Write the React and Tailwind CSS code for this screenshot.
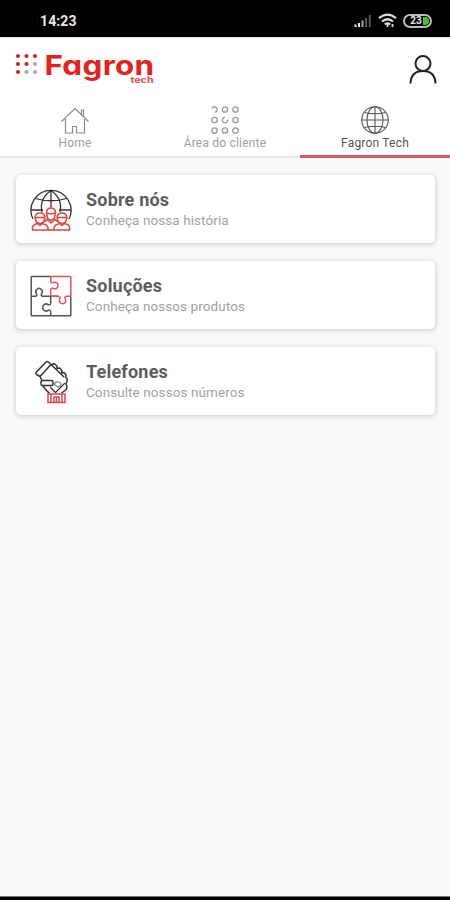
import React from "react";

function StatusBar() {
  return (
    <header className="flex h-[37px] shrink-0 items-center justify-between bg-black pt-1 pr-[18px] pl-10 text-[#e8e8e8]">
      <span className="text-[14px] leading-4 font-bold tracking-[0.1px]">14:23</span>
      <div className="flex items-center gap-[6px]">
        <svg width="18" height="14" viewBox="0 0 18 14" fill="none" strokeWidth="2">
          <path d="M1.500 13v-2.500M5 13V9" stroke="#eee" />
          <path d="M8.500 13V6.500" stroke="#aaa" />
          <path d="M12 13V4M15.800 13V1" stroke="#555" />
        </svg>
        <svg width="19" height="15" viewBox="0 0 19 15" fill="none" stroke="#ddd" strokeWidth="2.200">
          <path d="M1 5.200Q9.500-2 18 5.200M4 8.500q5.500-4.500 11 0M6.800 11.300q2.700-2 5.400 0" />
          <path d="M9.500 11v3M14.500 11v3" strokeWidth="1.800" />
        </svg>
        <div className="flex h-[14px] w-[29px] items-center justify-center rounded-full border-2 border-[#bbb] pl-1">
          <span className="text-[10px] leading-[10px] font-bold">23</span>
          <span className="ml-px h-2 w-[6px] rounded-r-full bg-[#45c431]" />
        </div>
      </div>
    </header>
  );
}

function Logo() {
  const dots = [
    [2, 2, "#d7202b"], [10.500, 2, "#d7202b"], [19, 2, "#d7202b"],
    [2, 10, "#d7202b"], [10.500, 10, "#d7202b"], [19, 10, "#aaa"],
    [2, 18, "#d7202b"], [10.500, 18, "#aaa"], [19, 18, "#aaa"],
  ];
  return (
    <svg width="142" height="40" viewBox="0 0 142 40" role="img" aria-label="Fagron tech">
      {dots.map(([x, y, c]) => (
        <circle key={x + "-" + y} cx={x + 1} cy={y + 6} r="2.100" fill={c} />
      ))}
      <text x="29.500" y="26.500" textLength="110" lengthAdjust="spacingAndGlyphs" className="fill-[#e5201d] font-['Inter',sans-serif] text-[27.500px] font-bold tracking-[0.3px] [font-feature-settings:'cv11']">
        Fagron
      </text>
      <text x="115.500" y="34.500" textLength="23" lengthAdjust="spacingAndGlyphs" className="fill-[#e0474b] font-['Inter',sans-serif] text-[8.500px] font-bold">
        tech
      </text>
    </svg>
  );
}

function HomeIcon() {
  return (
    <svg width="30" height="30" viewBox="0 0 30 30" fill="none" stroke="#8c8c8c" strokeWidth="1.200">
      <path d="M1.500 15.500 15 2.500l13.500 13M21.500 8V4h2v6M5.500 13v14h7v-6.500h4V27h8V13" />
    </svg>
  );
}

function GridIcon() {
  const full = [[15, 3.500], [25.500, 3.500], [4.500, 14], [25.500, 14], [4.500, 24.500], [15, 24.500], [25.500, 24.500]];
  return (
    <svg width="30" height="30" viewBox="0 0 30 30" fill="none" stroke="#9b9b9b" strokeWidth="1.300">
      {full.map(([x, y]) => (
        <circle key={x + "-" + y} cx={x} cy={y} r="2.700" />
      ))}
      <path d="M2 2.500a2.700 2.700 0 1 1 2.700 3.700M15 11.400a2.700 2.700 0 1 0 2.700 2.200" />
    </svg>
  );
}

function Globe() {
  return (
    <svg width="30" height="30" viewBox="0 0 30 30" fill="none" stroke="#555" strokeWidth="1.100">
      <circle cx="15" cy="14" r="13.300" />
      <ellipse cx="15" cy="14" rx="8" ry="13.300" />
      <path d="M15 .700v26.600M4.500 6.500Q15 9 25.500 6.500M1.700 14h26.600M4.500 21.500Q15 19 25.500 21.500" />
    </svg>
  );
}

function Tab({ icon, label, active }) {
  return (
    <button className={"flex h-[55px] flex-1 flex-col items-center pt-[3px] " + (active ? "border-b-[3px] border-[#d85c5a] text-[#555]" : "border-b-2 border-[#e8e8e8] text-[#a0a0a0]")}>
      {icon}
      <span className="text-[12px] leading-[14px] tracking-[0.2px] whitespace-nowrap">{label}</span>
    </button>
  );
}

function TeamIcon() {
  return (
    <svg className="mt-0.5" width="42" height="44" viewBox="0 0 42 44" fill="none" strokeWidth="1.300">
      <g stroke="#333">
        <path d="M3 31A20 20 0 1 1 39 31" />
        <path d="M21 2.500v17M12 24Q9 11 21 2.500 33 11 30 24M5.500 10.500Q21 15 36.500 10.500M1 22h12M29 22h12" />
      </g>
      <g stroke="#dc4540" strokeWidth="1.500">
        <path d="M16.500 25q0-5 4.500-5t4.500 5l-1 5-3.500 2.500-3.500-2.500zM16.500 25q4 1.500 9 0" />
        <path d="M5 30q0-5 5-5t5 5l-1.500 4-3.500 2-3.500-2zM27 30q0-5 5-5t5 5l-1.500 4-3.500 2-3.500-2zM5 29.500h10M27 29.500h10" />
        <path d="M2.500 42v-3.500l2-2 3-1 2.500 2 2.500-2 4 1.500 1.500 2.500V42zM24 42v-2.500l1.500-2.500 4-1.500 2.500 2 2.500-2 3 1 2 2V42zM14 34l3-2.500 4 3.500 4-3.500 3 2.500M18 42h6" />
      </g>
    </svg>
  );
}

function PuzzleIcon() {
  return (
    <svg className="mt-0.5" width="42" height="44" viewBox="0 0 42 44" fill="none" strokeWidth="1.500">
      <g stroke="#555">
        <path d="M20 2.500H2q-.800 0-.800.800V41q0 .800.800.800H40q.800 0 .800-.800V23M1.200 22.300H6M12 22.300h16M20.700 22v8M20.700 37v5" />
        <path d="M6 22.300q1.500-1 .300-3a3.200 3.200 0 1 1 5.500 0q-1.200 2 .200 3M20.700 30q-.700 1.500-2.700.500a3.500 3.500 0 1 0 0 6q2-1 2.700.500" />
      </g>
      <g stroke="#df555a">
        <path d="M20.700 21.500V15M20.700 8V2.500H40q.800 0 .800.800v19h-5M29 22.300h-8" />
        <path d="M20.700 8q.700 1.500 2.700.500a3.300 3.300 0 1 1 0 6q-2-1-2.700.500M29 22.300q2 1 .700 3a3.200 3.200 0 1 0 5.800 0q-1.200-2 .300-3" />
      </g>
    </svg>
  );
}

function PhoneIcon() {
  return (
    <svg className="mt-0.5" width="42" height="44" viewBox="0 0 42 44" fill="none" strokeWidth="1.500">
      <g stroke="#333" strokeLinejoin="round">
        <path d="M6 12.500 16 2q1-.800 2.300 0L21 4.500 10 16.500l-3.500-2q-1-1-.500-2ZM21 4.500 34 17M10 16.500l2 4" />
        <rect x="11" y="20.500" width="12" height="5" rx="1.500" />
        <path d="m21.500 5 2.500-1.500 3 2.500v2.500l2.500-.500 2.500 2.500-.500 2.500 2.500-.500 2 2.500-.500 2.500 1.500 1v3l-1 2.500 1 2.500-.500 3L31.500 33M12.500 25.500l4 5 3 3" />
        <path d="m20 27 5.500 5.500L35 23" strokeWidth="1.200" />
        <path d="M24.500 25q.500-4 4-3t2 4l-2.500 1z" stroke="#777" strokeWidth="1.200" />
      </g>
      <g stroke="#d94b45">
        <path d="M18 34h17v8.500H18zM21 34v8.500M32 34v8.500M24 42v-5h5v5M26.500 37v5" />
      </g>
    </svg>
  );
}

function Card({ icon, title, text }) {
  return (
    <article className="flex h-[68px] items-center rounded-[5px] bg-white pl-[14px] shadow-[0_1px_4px_1px_rgba(0,0,0,0.14)]">
      {icon}
      <div className="ml-[14px] flex flex-col pt-px">
        <h2 className="text-[18px] leading-[21px] font-bold tracking-[0.2px] text-[#5c5c5c]">{title}</h2>
        <p className="text-[13.500px] leading-5 tracking-[0.080px] text-[#a2a2a2]">{text}</p>
      </div>
    </article>
  );
}

export default function App() {
  return (
    <div className="flex h-[900px] w-[450px] flex-col overflow-hidden bg-[#f8f8f8] font-['Roboto',sans-serif]">
      <StatusBar />
      <div className="flex h-[66px] shrink-0 items-start justify-between border-t border-[#ddd] bg-white pt-[10px] pr-3 pl-[15px]">
        <Logo />
        <svg className="mt-[6px]" width="30" height="31" viewBox="0 0 30 31" fill="none" stroke="#222" strokeWidth="2">
          <circle cx="15" cy="9.500" r="7.500" />
          <path d="M2.500 29.500Q3 17 15 17t12.500 12.500" />
        </svg>
      </div>
      <nav className="flex shrink-0 bg-white">
        <Tab icon={<HomeIcon />} label="Home" />
        <Tab icon={<GridIcon />} label="Área do cliente" />
        <Tab icon={<Globe />} label="Fagron Tech" active />
      </nav>
      <main className="flex flex-1 flex-col gap-[18px] pt-[17px] pr-[15px] pl-4">
        <Card icon={<TeamIcon />} title="Sobre nós" text="Conheça nossa história" />
        <Card icon={<PuzzleIcon />} title="Soluções" text="Conheça nossos produtos" />
        <Card icon={<PhoneIcon />} title="Telefones" text="Consulte nossos números" />
      </main>
      <footer className="h-1 shrink-0 border-t border-[#777] bg-black" />
    </div>
  );
}
